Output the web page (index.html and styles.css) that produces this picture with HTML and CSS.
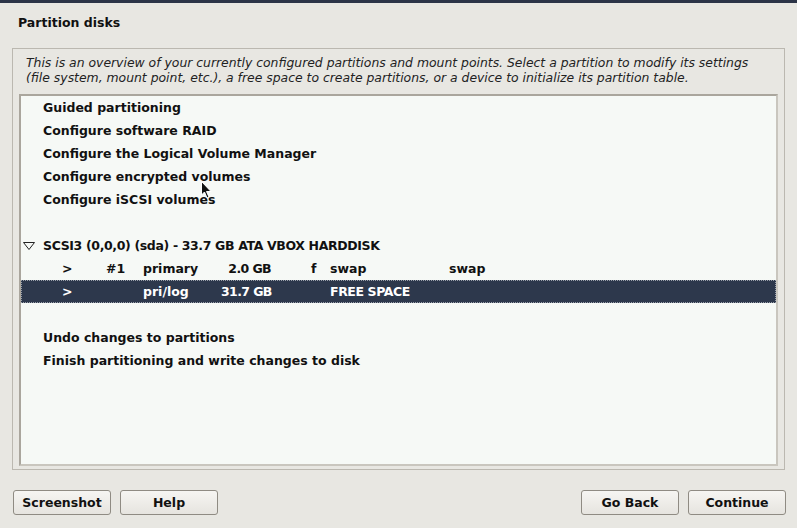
FILE: index.html
```html
<!DOCTYPE html>
<html>
<head>
<meta charset="utf-8">
<link rel="stylesheet" href="styles.css">
</head>
<body>
<div class="topbar"></div>
<div class="window">
  <h1 class="title">Partition disks</h1>
  <div class="frame">
    <p class="desc">This is an overview of your currently configured partitions and mount points. Select a partition to modify its settings (file system, mount point, etc.), a free space to create partitions, or a device to initialize its partition table.</p>
    <div class="list">
      <div class="row"><span class="ind"></span>Guided partitioning</div>
      <div class="row"><span class="ind"></span>Configure software RAID</div>
      <div class="row"><span class="ind"></span>Configure the Logical Volume Manager</div>
      <div class="row"><span class="ind"></span>Configure encrypted volumes</div>
      <div class="row"><span class="ind"></span>Configure iSCSI volumes</div>
      <div class="row"></div>
      <div class="row disk"><span class="ind"><svg class="tri" width="12" height="8" viewBox="0 0 12 8"><path d="M0.5 0.5 H11.5 L6 7.5 Z" fill="none" stroke="#222" stroke-width="1"/></svg></span>SCSI3 (0,0,0) (sda) - 33.7 GB ATA VBOX HARDDISK</div>
      <div class="row part"><span class="c-arrow">&gt;</span><span class="c-num">#1</span><span class="c-type">primary</span><span class="c-size">2.0 GB</span><span class="c-flag">f</span><span class="c-fs">swap</span><span class="c-mnt">swap</span></div>
      <div class="row part selected"><span class="c-arrow">&gt;</span><span class="c-num"></span><span class="c-type">pri/log</span><span class="c-size">31.7 GB</span><span class="c-flag"></span><span class="c-fs caps">FREE SPACE</span><span class="c-mnt"></span></div>
      <div class="row"></div>
      <div class="row"><span class="ind"></span>Undo changes to partitions</div>
      <div class="row"><span class="ind"></span>Finish partitioning and write changes to disk</div>
    </div>
  </div>
  <div class="buttons">
    <button class="btn">Screenshot</button>
    <button class="btn">Help</button>
    <span class="spacer"></span>
    <button class="btn">Go Back</button>
    <button class="btn">Continue</button>
  </div>
  <svg class="cursor" width="12" height="19" viewBox="0 0 12 19"><path d="M0.5 0.5 L0.5 14 L3.5 11 L6 17 L8 16 L5.5 10.5 L10 10.5 Z" fill="#111" stroke="#fff" stroke-width="1"/></svg>
</div>
</body>
</html>
```
FILE: styles.css
```css
html, body {
  margin: 0;
  padding: 0;
  background: #e8e7e2;
  font-family: "DejaVu Sans", sans-serif;
  color: #111;
}
.topbar {
  height: 3px;
  background: #2c3447;
}
.window {
  position: relative;
  height: 525px;
  display: flex;
  flex-direction: column;
}
.title {
  margin: 0;
  padding: 12px 0 0 18px;
  height: 33px;
  box-sizing: border-box;
  font-size: 12.5px;
  font-weight: bold;
  line-height: 16px;
}
.frame {
  margin: 12px 12px 0 12px;
  height: 422px;
  box-sizing: border-box;
  border: 1px solid #bbb8b0;
  padding: 6px 6px 3px 6px;
  display: flex;
  flex-direction: column;
}
.desc {
  margin: 0 0 0 7px;
  max-width: 735px;
  font-size: 12.4px;
  font-style: italic;
  line-height: 15px;
  color: #222;
}
.list {
  margin-top: 9px;
  flex: 1;
  background: #f6f9f6;
  border: 2px solid #aaa69d;
  border-right-color: #c9c6be;
  border-bottom-color: #c9c6be;
}
.row {
  height: 23px;
  line-height: 23px;
  font-size: 12.5px;
  font-weight: bold;
  display: flex;
  white-space: nowrap;
}
.disk { letter-spacing: -0.36px; }
.ind {
  width: 22px;
  box-sizing: border-box;
  display: inline-flex;
  align-items: center;
  padding-left: 2px;
  flex: none;
}
.tri { margin-top: 1px; }
.part span { display: inline-block; flex: none; box-sizing: border-box; }
.c-arrow { width: 85px; padding-left: 41px; }
.c-num { width: 37px; }
.c-type { width: 78px; }
.c-size { width: 50px; text-align: right; letter-spacing: -0.6px; }
.c-flag { width: 59px; padding-left: 40px; }
.c-fs { width: 119px; }
.c-fs.caps { letter-spacing: -0.4px; }
.c-mnt { width: 60px; }
.selected {
  background: #2d384c;
  color: #fff;
  outline: 1px dotted #9aa0aa;
  outline-offset: -1px;
}
.buttons {
  display: flex;
  gap: 9px;
  padding: 20px 11px 0 13px;
}
.spacer { flex: 1; }
.btn {
  width: 98px;
  height: 25px;
  font-family: "DejaVu Sans", sans-serif;
  font-size: 12.5px;
  font-weight: bold;
  color: #111;
  border: 1px solid #8f8b83;
  border-radius: 3px;
  background: linear-gradient(#f6f5f2, #e6e4df);
  padding: 0;
}
.cursor {
  position: absolute;
  left: 201px;
  top: 178px;
}
```
